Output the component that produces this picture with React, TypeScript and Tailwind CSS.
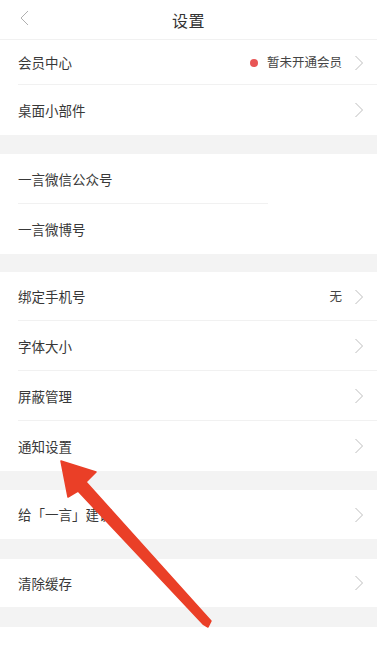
import React from 'react';

const font = { fontFamily: '"Noto Sans CJK SC", "Noto Sans", sans-serif' };

function Chevron() {
    return (
        <svg width="8" height="16" viewBox="0 0 8 16" className="shrink-0">
            <path d="M0.5 1 L7.5 8 L0.5 15" fill="none" stroke="#bdbdbd" strokeWidth="1" />
        </svg>
    );
}

type Row = { label: string; right?: React.ReactNode; h: string; divider?: boolean };

function SettingRow({ label, right, h, divider }: Row) {
    return (
        <div className={`relative flex items-center pl-[18px] pr-[14px] bg-white ${h}`}>
            <span className="flex-1 text-[13.5px] text-[#383838]">{label}</span>
            {right}
            <span className="ml-[13px]"><Chevron /></span>
            {divider && <div className="absolute bottom-0 left-[18px] right-0 h-px bg-[#f1f1f1]" />}
        </div>
    );
}

function Gap({ h }: { h: string }) {
    return <div className={`bg-[#f3f3f3] ${h}`} />;
}

export default function App() {
    return (
        <div className="relative w-[383px] h-[645px] bg-white overflow-hidden" style={font}>
            <div className="w-[377px]">
                {/* header */}
                <div className="relative h-[40px] flex items-center justify-center border-b border-[#f1f1f1]">
                    <svg width="10" height="16" viewBox="0 0 10 16" className="absolute left-[19px] top-[10px]">
                        <path d="M9 1 L2 8 L9 15" fill="none" stroke="#b0b0b0" strokeWidth="1" />
                    </svg>
                    <span className="text-[16px] text-[#333] tracking-wide" style={{ fontFamily: '"Noto Sans CJK SC", serif' }}>设置</span>
                </div>

                <SettingRow
                    label="会员中心"
                    h="h-[45px]"
                    divider
                    right={
                        <span className="flex items-center gap-[9px]">
                            <span className="w-[8px] h-[8px] rounded-full bg-[#e85555]" />
                            <span className="text-[12.5px] text-[#444]">暂未开通会员</span>
                        </span>
                    }
                />
                <SettingRow label="桌面小部件" h="h-[50px]" />
                <Gap h="h-[19px]" />
                <div className="relative h-[50px] flex items-center pl-[18px] bg-white">
                    <span className="text-[13.5px] text-[#383838]">一言微信公众号</span>
                    <div className="absolute bottom-0 left-[18px] w-[250px] h-px bg-[#f1f1f1]" />
                </div>
                <div className="h-[50px] flex items-center pl-[18px] bg-white">
                    <span className="text-[13.5px] text-[#383838]">一言微博号</span>
                </div>
                <Gap h="h-[18px]" />
                <SettingRow label="绑定手机号" h="h-[49px]" divider right={<span className="text-[12.5px] text-[#444]">无</span>} />
                <SettingRow label="字体大小" h="h-[50px]" divider />
                <SettingRow label="屏蔽管理" h="h-[50px]" divider />
                <SettingRow label="通知设置" h="h-[50px]" />
                <Gap h="h-[19px]" />
                <SettingRow label="给「一言」建议" h="h-[49px]" />
                <Gap h="h-[20px]" />
                <SettingRow label="清除缓存" h="h-[48px]" />
                <Gap h="h-[20px]" />
            </div>

            {/* annotation arrow */}
            <svg className="absolute left-0 top-0 pointer-events-none" width="383" height="645" viewBox="0 0 383 645">
                <polygon
                    points="61,461 96,472 86,482 211,621 208,627 203,624 78,491 68,497"
                    fill="#ea3f27"
                    stroke="#ea3f27"
                    strokeWidth="1.5"
                    strokeLinejoin="round"
                />
            </svg>
        </div>
    );
}
